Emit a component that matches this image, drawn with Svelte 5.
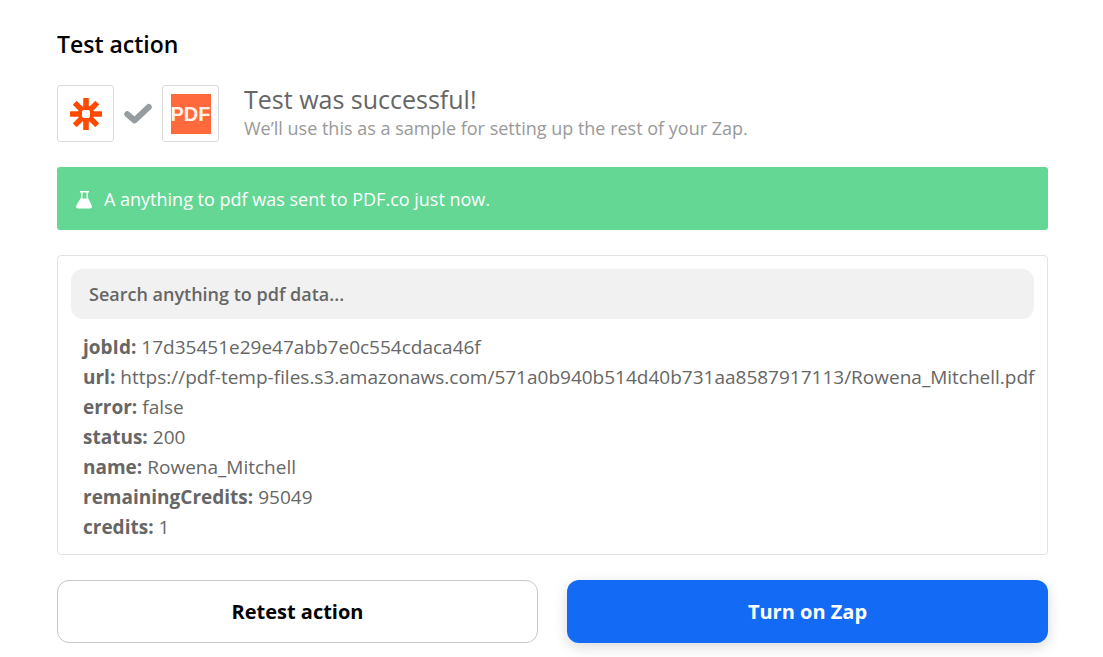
<script lang="ts">
	interface Field {
		key: string;
		value: string;
	}

	let {
		app = "PDF.co",
		action = "anything to pdf",
		onretest = () => {},
		onpublish = () => {},
	} = $props();

	let search = $state("");

	const fields: Field[] = [
		{ key: "jobId", value: "17d35451e29e47abb7e0c554cdaca46f" },
		{
			key: "url",
			value: "https://pdf-temp-files.s3.amazonaws.com/571a0b940b514d40b731aa8587917113/Rowena_Mitchell.pdf",
		},
		{ key: "error", value: "false" },
		{ key: "status", value: "200" },
		{ key: "name", value: "Rowena_Mitchell" },
		{ key: "remainingCredits", value: "95049" },
		{ key: "credits", value: "1" },
	];

	let visible = $derived(
		fields.filter((field) =>
			`${field.key} ${field.value}`.toLowerCase().includes(search.toLowerCase()),
		),
	);

	// spokes of the Zapier asterisk
	const spokes = [0, 45, 90, 135, 180, 225, 270, 315];
</script>

<main>
	<h1>Test action</h1>

	<div class="summary">
		<div class="tile">
			<svg width="34" height="34" viewBox="-17 -17 34 34" aria-hidden="true">
				{#each spokes as angle}
					<rect
						x="-2.8"
						y="-16"
						width="5.6"
						height="12"
						rx="0.6"
						fill="#ff4a00"
						transform="rotate({angle})"
					/>
				{/each}
				<circle r="6" fill="none" stroke="#ff4a00" stroke-width="4" />
				<rect x="-3.9" y="-3.9" width="7.8" height="7.8" rx="1.6" fill="#fff" />
			</svg>
		</div>
		<svg class="check" width="28" height="22" viewBox="0 0 28 22" aria-hidden="true">
			<path d="M3.3 11.2 10.6 17.4 24.8 4" />
		</svg>
		<div class="tile">
			<span class="pdf">PDF</span>
		</div>
		<div class="message">
			<h2>Test was successful!</h2>
			<p>We’ll use this as a sample for setting up the rest of your Zap.</p>
		</div>
	</div>

	<div class="banner" role="status">
		<svg width="16" height="20" viewBox="0 0 16 20" aria-hidden="true">
			<path
				fill-rule="evenodd"
				d="M4 1h9v1.6h-1.1v5.2l3.8 7.6q1 2.9-1.9 3.1H2.2q-2.9-.2-1.9-3.1L5 7.8V2.6H4zM6.5 2.6v4.6L6 8.4h5l-.5-1.2V2.6z"
			/>
		</svg>
		<span>A {action} was sent to {app} just now.</span>
	</div>

	<section class="result">
		<div class="search">
			<input
				bind:value={search}
				type="text"
				aria-label="Search {action} data"
				placeholder="Search {action} data..."
			/>
		</div>
		<dl>
			{#each visible as field}
				<div>
					<dt>{field.key}:</dt>
					<dd>{field.value}</dd>
				</div>
			{/each}
		</dl>
	</section>

	<div class="buttons">
		<button class="secondary" onclick={onretest}>Retest action</button>
		<button class="primary" onclick={onpublish}>Turn on Zap</button>
	</div>
</main>

<style>
	:global(body) {
		margin: 0;
		background: #fff;
	}

	main {
		padding: 28px 55px 14px 57px;
		font-family: "Open Sans", "Noto Sans", sans-serif;
		font-size: 18px;
		color: #666;
	}

	main,
	main * {
		box-sizing: border-box;
	}

	h1,
	h2,
	p,
	dl,
	dd {
		margin: 0;
	}

	h1 {
		font-size: 23px;
		line-height: 32px;
		font-weight: 600;
		color: #000;
	}

	.summary {
		display: flex;
		align-items: center;
		margin-top: 25px;
	}

	.tile {
		display: flex;
		align-items: center;
		justify-content: center;
		flex-shrink: 0;
		width: 57px;
		height: 57px;
		border: 1px solid #d9dbdd;
		border-radius: 3px;
	}

	.check {
		flex-shrink: 0;
		margin: 0 10px;
	}

	.check path {
		fill: none;
		stroke: #959da0;
		stroke-width: 6;
		stroke-linecap: round;
		stroke-linejoin: round;
	}

	.pdf {
		width: 40px;
		height: 40px;
		overflow: hidden;
		background: #ff693b;
		color: #fff0ea;
		font: bold 20px/40px "Liberation Sans", Arial, sans-serif;
		text-align: center;
	}

	.message {
		margin-left: 25px;
	}

	h2 {
		font-size: 25px;
		line-height: 29px;
		font-weight: 400;
	}

	.message p {
		line-height: 28px;
		color: #999;
	}

	.banner {
		display: flex;
		align-items: center;
		gap: 12px;
		margin-top: 25px;
		padding: 19px 19px 17px;
		border-radius: 3px;
		background: #64d795;
		color: #fff;
		line-height: 27px;
	}

	.banner svg {
		fill: #fff;
	}

	.result {
		margin-top: 25px;
		padding: 13px 0 12px;
		border: 1px solid #e2e2e2;
		border-radius: 4px;
	}

	.search {
		padding: 0 13px;
	}

	input {
		display: block;
		width: 100%;
		height: 50px;
		padding: 0 18px;
		border: 0;
		border-radius: 12px;
		background: #f1f1f1;
		color: #666;
		font: inherit;
		font-weight: 600;
	}

	input::placeholder {
		color: #666;
		opacity: 1;
	}

	dl {
		padding: 13px 0 0 25px;
		font-size: 19px;
		line-height: 30px;
	}

	dl > div {
		display: flex;
		gap: 5px;
	}

	dt {
		font-weight: 700;
	}

	dd {
		min-width: 0;
		overflow-wrap: anywhere;
	}

	.buttons {
		display: grid;
		grid-template-columns: 1fr 1fr;
		gap: 29px;
		margin-top: 25px;
	}

	button {
		height: 63px;
		border: 0;
		border-radius: 12px;
		font: inherit;
		font-size: 20px;
		font-weight: 700;
		cursor: pointer;
	}

	.secondary {
		border: 1px solid #c8c8c8;
		background: #fff;
		color: #000;
	}

	.primary {
		background: #136bf5;
		color: #fff;
		box-shadow: 0 4px 14px rgba(0, 0, 0, 0.15);
	}
</style>
